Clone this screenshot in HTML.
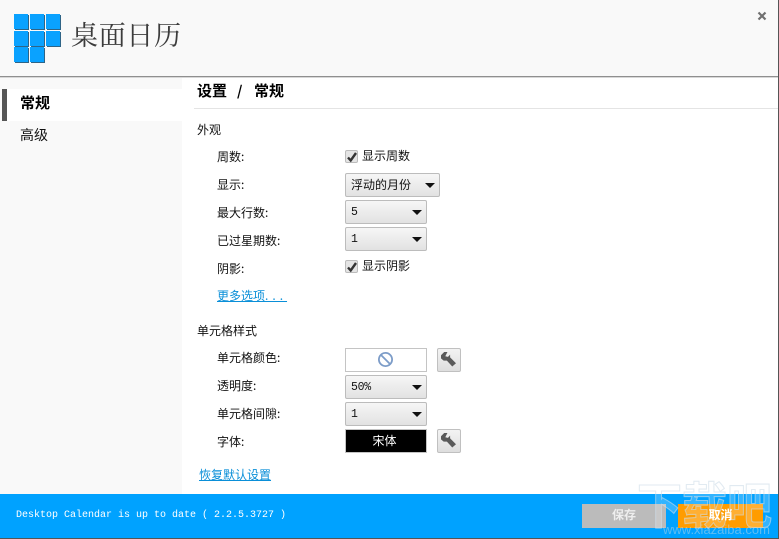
<!DOCTYPE html>
<html lang="zh"><head><meta charset="utf-8"><title>桌面日历</title>
<style>
html,body{margin:0;padding:0;background:#fff}
#w{position:relative;width:779px;height:539px;overflow:hidden;background:#fff;font:12px/14px "WenQuanYi Zen Hei","Noto Sans CJK SC",sans-serif;color:#111}
#w div,#w a,#w svg{position:absolute;display:block;white-space:nowrap}
.sq{width:14px;height:15px;background:#0aa2ff;box-shadow:1px 1px 0 #2f6486}
.l{left:217px}
.s{left:345px;width:80px;height:22px;border:1px solid #bcbcbc;border-radius:2px;background:linear-gradient(#f6f6f6,#e2e2e2);line-height:21px;text-indent:5px}
#w .n{font-family:"Liberation Mono",monospace;font-size:11.5px;line-height:23px;letter-spacing:-.3px}
.s i{position:absolute;right:4px;top:9px;width:0;height:0;border:5px solid transparent;border-top:5px solid #111;border-bottom:0}
.c{left:345px;width:11px;height:11px;border:1px solid #bbb;border-radius:2px;background:#e4e4e4}
.wr{left:437px;width:22px;height:22px;border:1px solid #c0c0c0;border-radius:2px;background:linear-gradient(#f3f3f3,#dedede)}
a{color:#0a8fd8;text-decoration:underline}
</style></head><body><div id="w">
<div style="left:0;top:0;width:778px;height:76px;background:#f9f9f9"></div>
<div style="left:0;top:76px;width:778px;height:1px;background:#8f8f8f"></div>
<div style="left:0;top:77px;width:778px;height:1px;background:#d8d8d8"></div>
<div style="left:0;top:78px;width:182px;height:416px;background:#f9f9f9"></div>

<div class="sq" style="left:14px;top:14px"></div><div class="sq" style="left:30px;top:14px"></div><div class="sq" style="left:46px;top:14px"></div>
<div class="sq" style="left:14px;top:31px"></div><div class="sq" style="left:30px;top:31px"></div><div class="sq" style="left:46px;top:31px"></div>
<div class="sq" style="left:14px;top:47px"></div><div class="sq" style="left:30px;top:47px"></div>
<div style="left:71px;top:15px;font:27px/38px 'Noto Serif CJK SC',serif;color:#3c3c3c;letter-spacing:.7px">桌面日历</div>
<svg style="left:757px;top:11px" width="10" height="10" viewBox="0 0 10 10"><path d="M1.5 1.5L8.5 8.5M8.5 1.5L1.5 8.5" stroke="#707070" stroke-width="2.2" fill="none"/></svg>

<div style="left:7px;top:89px;width:175px;height:32px;background:#fff"></div>
<div style="left:2px;top:89px;width:5px;height:32px;background:#555"></div>
<div style="left:20px;top:95px;font-size:15px;line-height:16px;font-weight:bold;color:#000">常规</div>
<div style="left:20px;top:127px;font-size:14px;line-height:16px">高级</div>

<div style="left:197px;top:83px;font-size:15px;line-height:16px;font-weight:bold;color:#000">设置</div>
<div style="left:237px;top:83px;font-size:14px;line-height:16px;font-weight:bold;color:#000">/</div>
<div style="left:254px;top:83px;font-size:15px;line-height:16px;font-weight:bold;color:#000">常规</div>
<div style="left:194px;top:108px;width:584px;height:1px;background:#e4e4e4"></div>

<div style="left:197px;top:123px">外观</div>
<div class="l" style="top:150px">周数:</div>
<div class="c" style="top:150px"></div>
<svg style="left:346px;top:151px" width="12" height="12" viewBox="0 0 12 12"><path d="M2 6.5L4.7 9.5L10 2" stroke="#333" stroke-width="2.4" fill="none"/></svg>
<div style="left:362px;top:149px">显示周数</div>
<div class="l" style="top:178px">显示:</div>
<div class="s" style="top:173px;width:93px">浮动的月份<i></i></div>
<div class="l" style="top:206px">最大行数:</div>
<div class="s n" style="top:200px">5<i></i></div>
<div class="l" style="top:234px">已过星期数:</div>
<div class="s n" style="top:227px">1<i></i></div>
<div class="l" style="top:262px">阴影:</div>
<div class="c" style="top:260px"></div>
<svg style="left:346px;top:261px" width="12" height="12" viewBox="0 0 12 12"><path d="M2 6.5L4.7 9.5L10 2" stroke="#333" stroke-width="2.4" fill="none"/></svg>
<div style="left:362px;top:259px">显示阴影</div>
<a class="l" style="top:289px">更多选项<span style="letter-spacing:4px">...</span></a>

<div style="left:197px;top:324px">单元格样式</div>
<div class="l" style="top:351px">单元格颜色:</div>
<div style="left:345px;top:348px;width:80px;height:22px;border:1px solid #c4c4c4;background:#fff"></div>
<svg style="left:377px;top:351px" width="17" height="17" viewBox="0 0 17 17"><circle cx="8.5" cy="8.5" r="6.6" stroke="#7c9cc8" stroke-width="1.8" fill="none"/><path d="M4 4L13 13" stroke="#7c9cc8" stroke-width="1.8"/></svg>
<div class="wr" style="top:348px"></div>
<svg style="left:441px;top:352px" width="15" height="15" viewBox="0 0 14 14"><path d="M6 0L3 0L0 3L0 6L2.5 8L5.5 8L10.5 13.5L14 10.5L8.5 5L8.5 2.5L6.5 4.5L4 4Z" fill="#5a5a5a"/></svg>
<div class="l" style="top:379px">透明度:</div>
<div class="s n" style="top:375px">50%<i></i></div>
<div class="l" style="top:407px">单元格间隙:</div>
<div class="s n" style="top:402px">1<i></i></div>
<div class="l" style="top:435px">字体:</div>
<div style="left:345px;top:429px;width:80px;height:22px;border:1px solid #c4c4c4;background:#000;color:#fff;text-align:center;line-height:21px;text-indent:-3px">宋体</div>
<div class="wr" style="top:429px"></div>
<svg style="left:441px;top:433px" width="15" height="15" viewBox="0 0 14 14"><path d="M6 0L3 0L0 3L0 6L2.5 8L5.5 8L10.5 13.5L14 10.5L8.5 5L8.5 2.5L6.5 4.5L4 4Z" fill="#5a5a5a"/></svg>
<a style="left:199px;top:468px">恢复默认设置</a>

<div style="left:0;top:494px;width:778px;height:44px;background:#00a2ff"></div>
<div style="left:16px;top:510px;font:10px/12px 'Liberation Mono',monospace;color:#fff">Desktop Calendar is up to date ( 2.2.5.3727 )</div>
<div style="left:582px;top:504px;width:84px;height:24px;background:#bbb"></div>
<div style="left:678px;top:504px;width:85px;height:24px;background:#ff9c00"></div>

<div style="left:637px;top:476px;font:bold 45px/48px 'Noto Sans CJK SC',sans-serif;color:rgba(255,255,255,.2);-webkit-text-stroke:1px rgba(205,220,232,.6);transform:scaleY(1.1);transform-origin:0 0">下载吧</div>
<div style="left:663px;top:524px;font:13px/12px 'Liberation Sans',sans-serif;color:rgba(190,215,230,.5)">www.xiazaiba.com</div>

<div style="left:582px;top:504px;width:84px;height:24px;color:#eee;font-weight:bold;text-align:center;line-height:22px">保存</div>
<div style="left:678px;top:504px;width:85px;height:24px;color:#fff;font-weight:bold;text-align:center;line-height:22px">取消</div>

<div style="left:778px;top:0;width:1px;height:539px;background:#555"></div>
<div style="left:0;top:538px;width:779px;height:1px;background:#555"></div>
</div></body></html>
